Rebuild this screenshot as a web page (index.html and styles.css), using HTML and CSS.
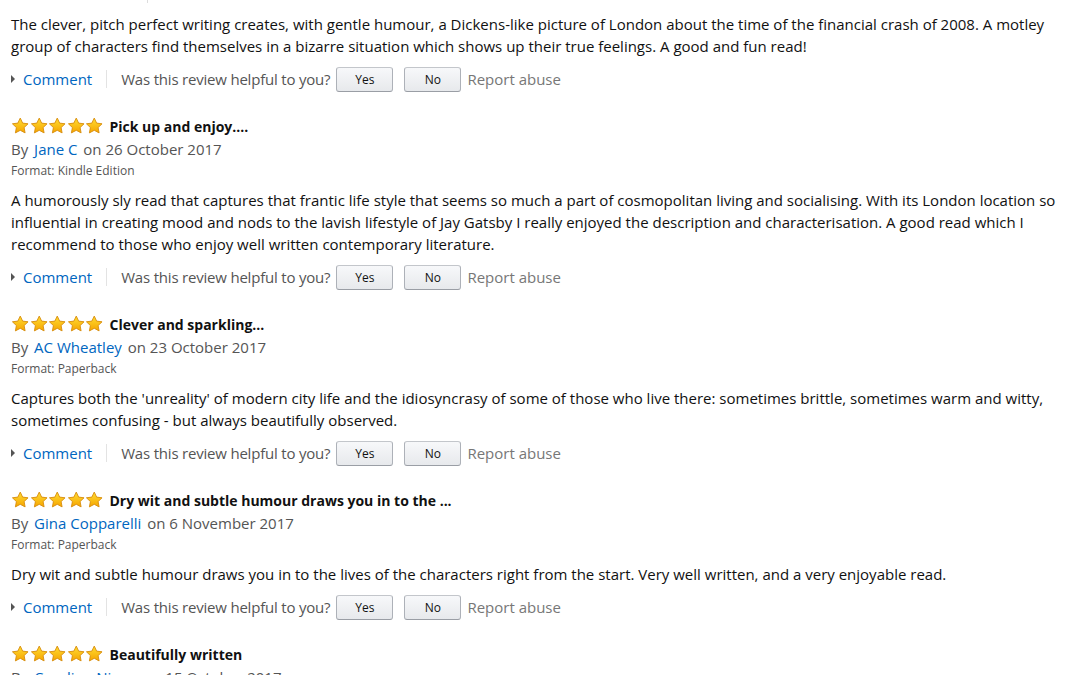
FILE: index.html
```html
<!DOCTYPE html>
<html lang="en">
  <head>
    <meta charset="UTF-8" />
    <title>Customer reviews</title>
    <link rel="stylesheet" href="styles.css">
  </head>
  <body>
    <svg class="defs" width="0" height="0">
      <defs>
        <linearGradient id="starFill" x1="0" y1="0" x2="0" y2="1">
          <stop offset="0" stop-color="#ffdd33" />
          <stop offset="1" stop-color="#f6a500" />
        </linearGradient>
        <symbol id="star" viewBox="0 0 18 18">
          <path d="M9 1.1l2.4 5 5.4.7-3.95 3.75 1 5.35L9 13.3l-4.85 2.6 1-5.35L1.2 6.8l5.4-.7z"
                fill="url(#starFill)" stroke="#d68b0c" stroke-width="0.9" stroke-linejoin="round" />
        </symbol>
      </defs>
    </svg>

    <div class="reviews">
      <!-- first review, scrolled partly off the top -->
      <div class="review">
        <div class="format">Format: Kindle Edition<span class="sep"></span><span class="verified">Verified Purchase</span></div>
        <p class="body">The clever, pitch perfect writing creates, with gentle humour, a Dickens-like picture of London about the time of the financial crash of 2008. A motley group of characters find themselves in a bizarre situation which shows up their true feelings. A good and fun read!</p>
        <div class="actions">
          <a class="comment" href="#">Comment</a>
          <span class="divider"></span>
          <span class="helpful">Was this review helpful to you?</span>
          <button class="btn">Yes</button>
          <button class="btn">No</button>
          <a class="report" href="#">Report abuse</a>
        </div>
      </div>

      <div class="review">
        <div class="head">
          <span class="stars">
            <svg><use href="#star" /></svg><svg><use href="#star" /></svg><svg><use href="#star" /></svg><svg><use href="#star" /></svg><svg><use href="#star" /></svg>
          </span>
          <span class="title">Pick up and enjoy....</span>
        </div>
        <div class="byline">By <a href="#">Jane C</a> on 26 October 2017</div>
        <div class="format">Format: Kindle Edition</div>
        <p class="body">A humorously sly read that captures that frantic life style that seems so much a part of cosmopolitan living and socialising. With its London location so influential in creating mood and nods to the lavish lifestyle of Jay Gatsby I really enjoyed the description and characterisation. A good read which I recommend to those who enjoy well written contemporary literature.</p>
        <div class="actions">
          <a class="comment" href="#">Comment</a>
          <span class="divider"></span>
          <span class="helpful">Was this review helpful to you?</span>
          <button class="btn">Yes</button>
          <button class="btn">No</button>
          <a class="report" href="#">Report abuse</a>
        </div>
      </div>

      <div class="review">
        <div class="head">
          <span class="stars">
            <svg><use href="#star" /></svg><svg><use href="#star" /></svg><svg><use href="#star" /></svg><svg><use href="#star" /></svg><svg><use href="#star" /></svg>
          </span>
          <span class="title">Clever and sparkling...</span>
        </div>
        <div class="byline">By <a href="#">AC Wheatley</a> on 23 October 2017</div>
        <div class="format">Format: Paperback</div>
        <p class="body">Captures both the 'unreality' of modern city life and the idiosyncrasy of some of those who live there: sometimes brittle, sometimes warm and witty, sometimes confusing - but always beautifully observed.</p>
        <div class="actions">
          <a class="comment" href="#">Comment</a>
          <span class="divider"></span>
          <span class="helpful">Was this review helpful to you?</span>
          <button class="btn">Yes</button>
          <button class="btn">No</button>
          <a class="report" href="#">Report abuse</a>
        </div>
      </div>

      <div class="review">
        <div class="head">
          <span class="stars">
            <svg><use href="#star" /></svg><svg><use href="#star" /></svg><svg><use href="#star" /></svg><svg><use href="#star" /></svg><svg><use href="#star" /></svg>
          </span>
          <span class="title">Dry wit and subtle humour draws you in to the ...</span>
        </div>
        <div class="byline">By <a href="#">Gina Copparelli</a> on 6 November 2017</div>
        <div class="format">Format: Paperback</div>
        <p class="body">Dry wit and subtle humour draws you in to the lives of the characters right from the start. Very well written, and a very enjoyable read.</p>
        <div class="actions">
          <a class="comment" href="#">Comment</a>
          <span class="divider"></span>
          <span class="helpful">Was this review helpful to you?</span>
          <button class="btn">Yes</button>
          <button class="btn">No</button>
          <a class="report" href="#">Report abuse</a>
        </div>
      </div>

      <div class="review">
        <div class="head">
          <span class="stars">
            <svg><use href="#star" /></svg><svg><use href="#star" /></svg><svg><use href="#star" /></svg><svg><use href="#star" /></svg><svg><use href="#star" /></svg>
          </span>
          <span class="title">Beautifully written</span>
        </div>
        <div class="byline">By <a href="#">Caroline Nixon</a> on 15 October 2017</div>
        <div class="format">Format: Paperback</div>
      </div>
    </div>
  </body>
</html>
```

FILE: styles.css
```css
body {
  margin: 0;
  background: #fff;
  color: #111;
  font-family: "Open Sans", "Liberation Sans", sans-serif;
  font-size: 15px;
  overflow: hidden;
}

a {
  color: #0066c0;
  text-decoration: none;
}

.defs {
  position: absolute;
}

.reviews {
  margin-top: -16px;
  padding: 0 20px 0 11px;
}

.review {
  margin-bottom: 20px;
}

.head {
  display: flex;
  align-items: center;
  height: 24px;
}

.stars {
  display: flex;
}

.stars svg {
  width: 18.5px;
  height: 18px;
}

.title {
  margin-left: 6px;
  font-weight: 700;
  font-size: 14px;
}

.byline {
  height: 22px;
  line-height: 22px;
  color: #555;
}

.byline a {
  margin: 0 2px;
}

.format {
  height: 22px;
  line-height: 22px;
  font-size: 12px;
  color: #555;
}

.sep {
  display: inline-block;
  width: 1px;
  height: 14px;
  margin: 0 12px;
  background: #ddd;
  vertical-align: middle;
}

.verified {
  color: #c45500;
  font-weight: 700;
}

.body {
  margin: 7px 0 0;
  line-height: 22px;
}

.actions {
  display: flex;
  align-items: center;
  height: 30px;
  margin-top: 7px;
}

.comment {
  display: flex;
  align-items: center;
}

.comment::before {
  content: "";
  width: 0;
  height: 0;
  margin: 0 8px 0 0;
  border-top: 4px solid transparent;
  border-bottom: 4px solid transparent;
  border-left: 4px solid #555;
}

.divider {
  width: 1px;
  height: 18px;
  margin: 0 14px;
  background: #e3e3e3;
}

.helpful {
  color: #555;
  letter-spacing: -0.2px;
}

.btn {
  width: 57px;
  height: 25px;
  margin-left: 6px;
  padding: 0;
  border: 1px solid #adb1b8;
  border-top-color: #c3c6cb;
  border-bottom-color: #9a9ea5;
  border-radius: 3px;
  background: linear-gradient(#f7f8fa, #e7e9ec);
  font-family: inherit;
  font-size: 12px;
  color: #111;
}

.btn + .btn {
  margin-left: 11px;
}

.report {
  margin-left: 6px;
  color: #777;
}
```
